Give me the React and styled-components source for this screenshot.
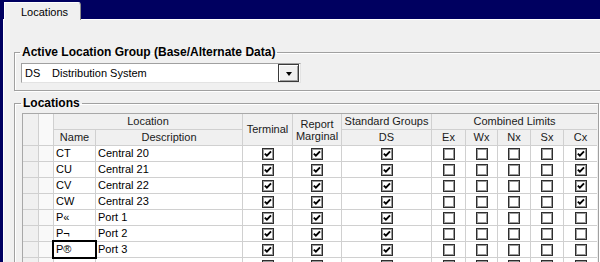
import React from "react";
import styled, { createGlobalStyle } from "styled-components";

const GlobalStyle = createGlobalStyle`
  html, body {
    margin: 0;
    padding: 0;
    overflow: hidden;
  }
  body {
    font-family: "Liberation Sans", Arial, sans-serif;
    font-size: 11px;
    color: #000;
  }
`;

const rows = [
  { code: "CT", desc: "Central 20", cx: true },
  { code: "CU", desc: "Central 21", cx: true },
  { code: "CV", desc: "Central 22", cx: true },
  { code: "CW", desc: "Central 23", cx: true },
  { code: "P«", desc: "Port 1" },
  { code: "P¬", desc: "Port 2" },
  { code: "P®", desc: "Port 3", selected: true },
  { code: "", desc: "" },
];

const limits = ["Ex", "Wx", "Nx", "Sx", "Cx"];

function CheckBox({ checked }) {
  return (
    <Box>
      {checked && (
        <svg width="12" height="12" viewBox="0 0 12 12">
          <polyline
            points="2.8,5.6 4.9,7.7 9,3.4"
            fill="none"
            stroke="#000"
            strokeWidth="1.9"
          />
        </svg>
      )}
    </Box>
  );
}

function App() {
  return (
    <Screen>
      <GlobalStyle />
      <TabStrip>
        <Tab>Locations</Tab>
      </TabStrip>
      <Panel>
        <Group $wide>
          <Legend>Active Location Group (Base/Alternate Data)</Legend>
          <Combo>
            <ComboCode>DS</ComboCode>
            <ComboText>Distribution System</ComboText>
            <DropButton>
              <Arrow />
            </DropButton>
          </Combo>
        </Group>

        <Group $second>
          <Legend>Locations</Legend>
          <Grid>
            <HeadCell $rows={2} $tone="#f0f0f0" />
            <HeadCell $rows={2} $tone="#f9f9f9" />
            <HeadCell $span={2}>Location</HeadCell>
            <HeadCell $rows={2}>Terminal</HeadCell>
            <HeadCell $rows={2} $tight>
              Report
              <br />
              Marginal
            </HeadCell>
            <HeadCell>Standard Groups</HeadCell>
            <HeadCell $span={5}>Combined Limits</HeadCell>
            <HeadCell>Name</HeadCell>
            <HeadCell>Description</HeadCell>
            <HeadCell>DS</HeadCell>
            {limits.map((l) => (
              <HeadCell key={l}>{l}</HeadCell>
            ))}

            {rows.map((r, i) => (
              <React.Fragment key={i}>
                <SideCell $tone="#f0f0f0" />
                <SideCell $tone="#f9f9f9" />
                <TextCell $selected={r.selected}>{r.code}</TextCell>
                <TextCell>{r.desc}</TextCell>
                <CheckCell>
                  <CheckBox checked />
                </CheckCell>
                <CheckCell>
                  <CheckBox checked />
                </CheckCell>
                <CheckCell>
                  <CheckBox checked />
                </CheckCell>
                {limits.map((l) => (
                  <CheckCell key={l}>
                    <CheckBox checked={l === "Cx" && r.cx} />
                  </CheckCell>
                ))}
              </React.Fragment>
            ))}
          </Grid>
        </Group>
      </Panel>
    </Screen>
  );
}

export default App;

const Screen = styled.div`
  width: 600px;
  height: 262px;
  background: #000060;
  display: flex;
  flex-direction: column;
  overflow: hidden;
`;

const TabStrip = styled.div`
  height: 19px;
  display: flex;
  align-items: flex-end;
  padding-left: 4px;
  flex-shrink: 0;
`;

const Tab = styled.div`
  position: relative;
  z-index: 1;
  box-sizing: border-box;
  width: 77px;
  height: 18px;
  margin-bottom: -1px;
  background: #f0f0f0;
  border-top: 1px solid #fff;
  border-left: 1px solid #fff;
  border-right: 1px solid #8a8a8a;
  border-top-right-radius: 3px;
  padding: 2px 0 0 16px;
  font-size: 11px;
  line-height: 14px;
  color: #000;
`;

const Panel = styled.div`
  flex: 1;
  margin-left: 3px;
  background: #f0f0f0;
  border-top: 1px solid #fff;
  border-left: 1px solid #fff;
  padding: 25px 0 0 10px;
  overflow: hidden;
`;

const Group = styled.fieldset`
  margin: ${(p) => (p.$second ? "5px 0 0 0" : "0")};
  width: ${(p) => (p.$wide ? "640px" : "585px")};
  box-sizing: border-box;
  min-width: 0;
  padding: ${(p) => (p.$second ? "3px 0 0 7px" : "4px 0 7px 6px")};
  border: 1px solid #a0a0a0;
  box-shadow: inset 1px 1px 0 #fff, 1px 1px 0 #fff;
`;

const Legend = styled.legend`
  padding: 0 2px;
  margin-left: -1px;
  font-size: 12px;
  font-weight: bold;
  line-height: 14px;
  color: #000;
`;

const Combo = styled.div`
  box-sizing: border-box;
  width: 280px;
  height: 20px;
  display: flex;
  align-items: center;
  background: #fff;
  border: 1px solid;
  border-color: #a0a0a0 #e3e3e3 #e3e3e3 #a0a0a0;
  padding-left: 3px;
`;

const ComboCode = styled.span`
  width: 27px;
  font-size: 11px;
`;

const ComboText = styled.span`
  flex: 1;
  font-size: 11px;
`;

const DropButton = styled.div`
  box-sizing: border-box;
  width: 21px;
  align-self: stretch;
  margin-right: 1px;
  display: flex;
  align-items: center;
  justify-content: center;
  background: #f0f0f0;
  border: 1px solid #3a3a3a;
  box-shadow: inset 1px 1px 0 #fff, inset -1px -1px 0 #a0a0a0;
`;

const Arrow = styled.span`
  width: 0;
  height: 0;
  border-left: 3.5px solid transparent;
  border-right: 3.5px solid transparent;
  border-top: 4px solid #000;
  margin-top: 1px;
`;

const Grid = styled.div`
  display: grid;
  grid-template-columns: 15px 14px 41px 146px 49px 48px 89px 33px 31px 32px 32px 33px;
  grid-auto-rows: 15px;
  gap: 1px;
  width: max-content;
  background: #d0d0d0;
  border-top: 1px solid #a8a8a8;
  border-left: 1px solid #a8a8a8;
`;

const HeadCell = styled.div`
  grid-column: span ${(p) => p.$span || 1};
  grid-row: span ${(p) => p.$rows || 1};
  background: ${(p) => p.$tone || "#f0f0f0"};
  display: flex;
  align-items: center;
  justify-content: center;
  text-align: center;
  font-size: 11px;
  line-height: ${(p) => (p.$tight ? "12px" : "15px")};
  color: #1a1a1a;
  white-space: nowrap;
`;

const SideCell = styled.div`
  background: ${(p) => p.$tone};
`;

const TextCell = styled.div`
  position: relative;
  z-index: ${(p) => (p.$selected ? 2 : 0)};
  background: #fff;
  padding-left: 2px;
  font-size: 11px;
  line-height: 15px;
  white-space: nowrap;
  overflow: ${(p) => (p.$selected ? "visible" : "hidden")};
  outline: ${(p) => (p.$selected ? "2px solid #000" : "none")};
`;

const CheckCell = styled.div`
  background: #fff;
  display: flex;
  align-items: center;
  justify-content: center;
`;

const Box = styled.span`
  box-sizing: border-box;
  width: 12px;
  height: 12px;
  border: 1px solid #2e2e2e;
  box-shadow: inset 0 0 0 1px #9a9a9a;
  background: #fff;
  position: relative;
  display: flex;
  align-items: center;
  justify-content: center;
  svg {
    position: absolute;
    left: -1px;
    top: -1px;
  }
`;
